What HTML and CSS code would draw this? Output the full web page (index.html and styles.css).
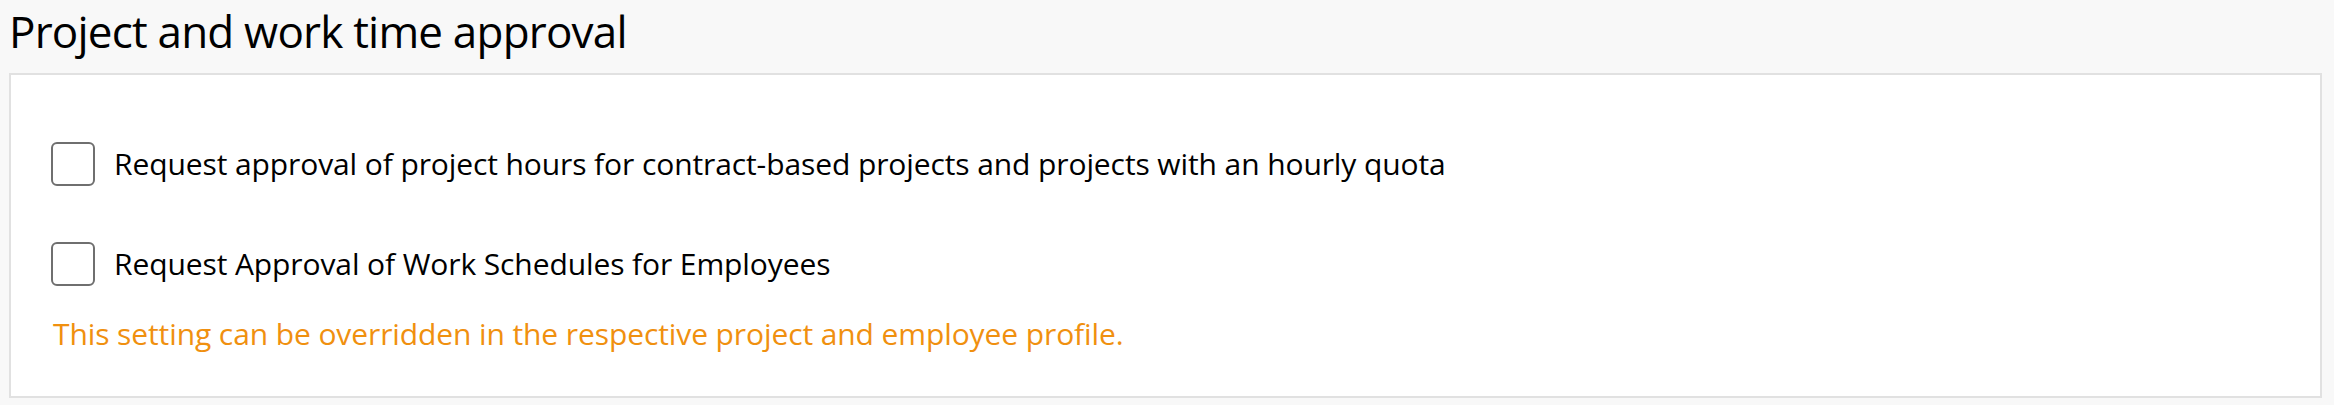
FILE: index.html
```html
<!DOCTYPE html>
<html lang="en">
<head>
<meta charset="utf-8">
<title>Project and work time approval</title>
<link rel="stylesheet" href="styles.css">
</head>
<body>
<div class="page">
  <h1 class="title">Project and work time approval</h1>
  <section class="card">
    <label class="option">
      <span class="box"></span>
      <span class="label">Request approval of project hours for contract-based projects and projects with an hourly quota</span>
    </label>
    <label class="option">
      <span class="box"></span>
      <span class="label">Request Approval of Work Schedules for Employees</span>
    </label>
    <p class="hint">This setting can be overridden in the respective project and employee profile.</p>
  </section>
</div>
</body>
</html>
```
FILE: styles.css
```css
html, body {
  margin: 0;
  padding: 0;
  background: #f8f8f8;
}
body {
  font-family: "Open Sans", "Noto Sans", "Liberation Sans", sans-serif;
  color: #000;
}
.page {
  padding: 3px 12px 0 9px;
}
.title {
  margin: 0 0 14px 0;
  font-size: 44px;
  font-weight: 400;
  line-height: 56px;
  letter-spacing: -0.8px;
}
.card {
  background: #fff;
  border: 2px solid #e1e1e1;
  padding: 67px 40px 42px 40px;
  display: flex;
  flex-direction: column;
}
.option {
  display: flex;
  align-items: center;
  height: 44px;
  gap: 19px;
}
.option + .option {
  margin-top: 56px;
}
.box {
  width: 44px;
  height: 44px;
  box-sizing: border-box;
  border: 2px solid #6f6f6f;
  border-radius: 6px;
  background: #fff;
  flex: none;
}
.label {
  font-size: 30px;
  line-height: 40px;
  letter-spacing: -0.1px;
}
.hint {
  margin: 28px 0 0 2px;
  font-size: 30px;
  line-height: 40px;
  color: #f0900f;
  letter-spacing: -0.1px;
}
```
